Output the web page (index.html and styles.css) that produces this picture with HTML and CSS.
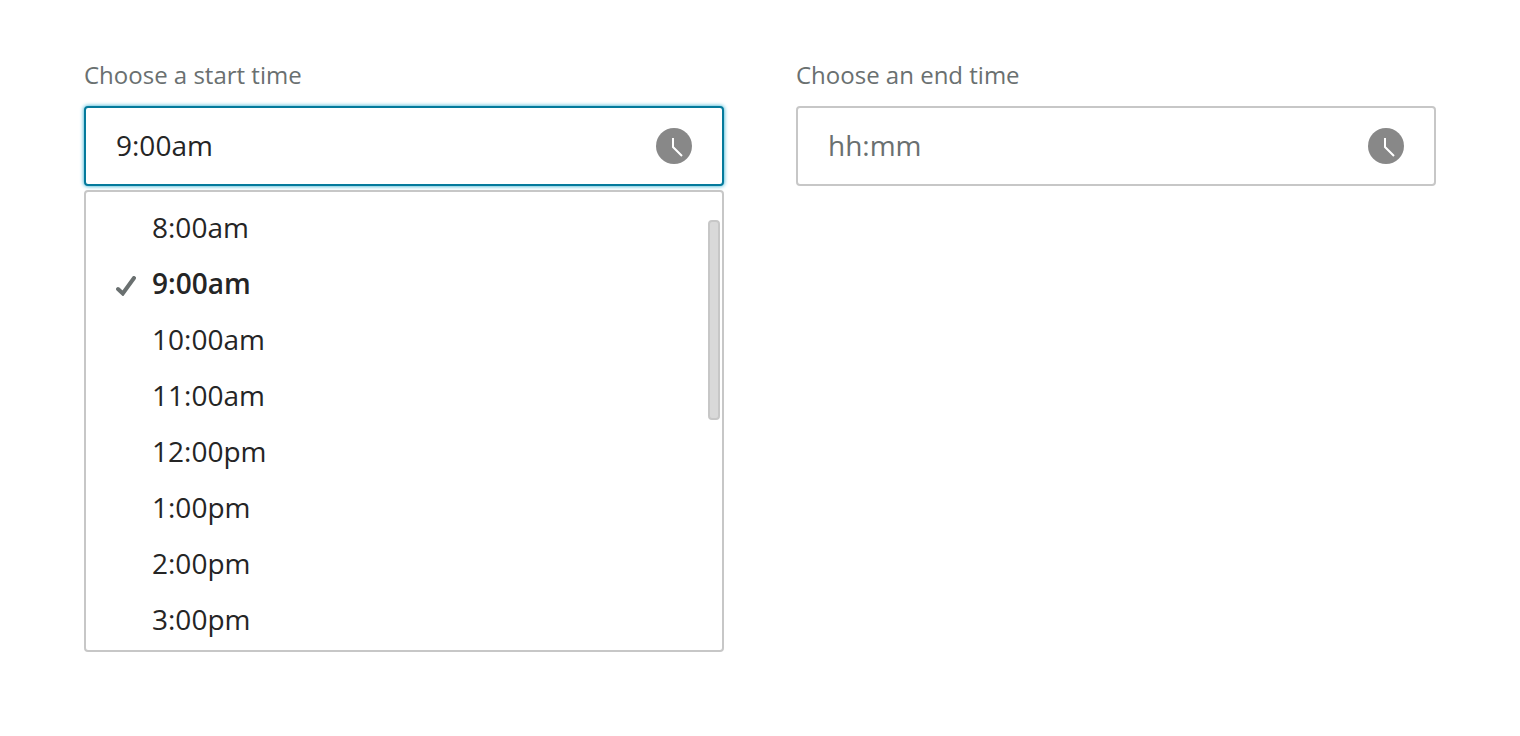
FILE: index.html
```html
<!DOCTYPE html>
<html lang="en">
<head>
<meta charset="utf-8">
<meta name="viewport" content="width=device-width, initial-scale=1">
<title>Choose a time</title>
<link rel="stylesheet" href="styles.css">
</head>
<body>
<main class="time-range">
  <div class="field">
    <label class="label" for="start-time">Choose a start time</label>
    <div class="control control-active">
      <input class="input" id="start-time" type="text" placeholder="hh:mm" value="9:00am" autocomplete="off">
      <button class="toggle" type="button" aria-label="Show start times">
        <svg class="clock" viewBox="0 0 36 36" aria-hidden="true"><circle cx="18" cy="18" r="18" fill="#888"/><path d="M17 10v9l9 9" fill="none" stroke="#fff" stroke-width="2"/></svg>
      </button>
    </div>
    <div class="menu">
      <ul class="options" role="listbox" aria-label="Start times">
        <li><button class="option" type="button" role="option">8:00am</button></li>
        <li><button class="option option-selected" type="button" role="option" aria-selected="true"><svg class="check" viewBox="0 0 20 20" aria-hidden="true"><path d="M2 13l4.800 4.500L18 2" fill="none" stroke="#6a7070" stroke-width="4" stroke-linecap="round" stroke-linejoin="miter"/></svg>9:00am</button></li>
        <li><button class="option" type="button" role="option">10:00am</button></li>
        <li><button class="option" type="button" role="option">11:00am</button></li>
        <li><button class="option" type="button" role="option">12:00pm</button></li>
        <li><button class="option" type="button" role="option">1:00pm</button></li>
        <li><button class="option" type="button" role="option">2:00pm</button></li>
        <li><button class="option" type="button" role="option">3:00pm</button></li>
      </ul>
      <div class="scroll-thumb"></div>
    </div>
  </div>
  <div class="field">
    <label class="label" for="end-time">Choose an end time</label>
    <div class="control">
      <input class="input" id="end-time" type="text" placeholder="hh:mm" autocomplete="off">
      <button class="toggle" type="button" aria-label="Show end times">
        <svg class="clock" viewBox="0 0 36 36" aria-hidden="true"><circle cx="18" cy="18" r="18" fill="#888"/><path d="M17 10v9l9 9" fill="none" stroke="#fff" stroke-width="2"/></svg>
      </button>
    </div>
  </div>
</main>
</body>
</html>
```
FILE: styles.css
```css
* {
  box-sizing: border-box;
}

body {
  margin: 0;
  background: #fff;
  color: #252525;
  font-family: "Open Sans", "Noto Sans", sans-serif;
  font-size: 28px;
}

.time-range {
  display: grid;
  grid-template-columns: 1fr 1fr;
  gap: 72px;
  align-items: start;
  padding: 60px 84px;
}

.label {
  display: block;
  margin-bottom: 16px;
  color: #6a7070;
  font-size: 24px;
  line-height: 30px;
}

.control {
  display: flex;
  align-items: center;
  height: 80px;
  padding: 0 30px;
  border: 2px solid #c7c7c7;
  border-radius: 4px;
  background: #fff;
}

.control-active {
  border-color: #047a9c;
  box-shadow: 0 0 4px #19a6cc;
}

.input {
  flex: 1;
  min-width: 0;
  height: 40px;
  padding: 0 0 2px;
  border: 0;
  outline: 0;
  background: transparent;
  color: inherit;
  font: inherit;
}

.input::placeholder {
  color: #6a7070;
  opacity: 1;
}

.toggle {
  display: flex;
  padding: 0;
  border: 0;
  background: none;
}

.clock {
  width: 36px;
  height: 36px;
}

.menu {
  position: relative;
  margin-top: 4px;
  padding: 8px 0 2px;
  border: 2px solid #c7c7c7;
  border-radius: 4px;
  background: #fff;
}

.options {
  margin: 0;
  padding: 0;
  list-style: none;
}

.option {
  display: flex;
  align-items: center;
  width: 100%;
  height: 56px;
  padding: 0 30px 2px 66px;
  border: 0;
  background: none;
  color: inherit;
  font: inherit;
  text-align: left;
}

.option-selected {
  gap: 16px;
  padding-left: 30px;
  font-weight: 600;
}

.check {
  width: 20px;
  height: 20px;
  margin-top: 6px;
}

.scroll-thumb {
  position: absolute;
  top: 28px;
  right: 2px;
  width: 12px;
  height: 200px;
  border: 2px solid #c7c7c7;
  border-radius: 4px;
  background: #d9d9d9;
}
```
